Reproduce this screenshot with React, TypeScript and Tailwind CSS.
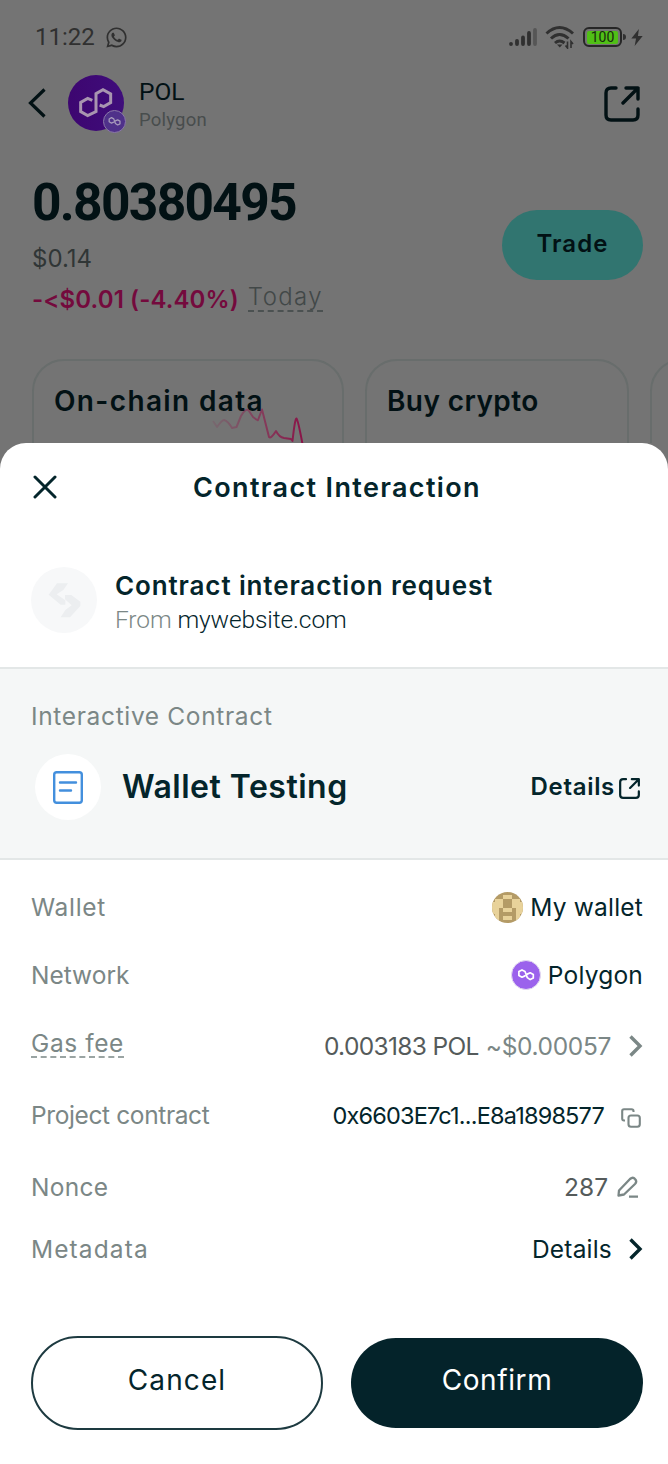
import { ReactNode } from "react";
import { FaWhatsapp } from "react-icons/fa";

const PolygonMark = ({ className }: { className: string }) => (
  <svg viewBox="0 0 28 28" className={className} fill="none" stroke="currentColor" strokeWidth="1.7" strokeLinejoin="round" strokeLinecap="round">
    <path d="M12.9 14.9 10 16.2 6.9 14.4V10.6L10 8.9 13 10.5 15.3 16.6 18.2 18.6 21.3 17.1V13.5L18.2 11.8 15.2 13.1" />
  </svg>
);

const ExternalLink = ({ className, strokeWidth }: { className: string; strokeWidth: number }) => (
  <svg viewBox="0 0 36 36" className={className} fill="none" stroke="currentColor" strokeWidth={strokeWidth} strokeLinecap="round" strokeLinejoin="round">
    <path d="M12 2H7Q2 2 2 7V29Q2 34 7 34H29Q34 34 34 29V23M22 2H34V13M34 2 19 17" />
  </svg>
);

const Chevron = ({ className }: { className: string }) => (
  <svg viewBox="0 0 14 22" className={className} fill="none" stroke="currentColor" strokeWidth="3.4">
    <path d="M1.5 1.5 11 11 1.5 20.5" />
  </svg>
);

const StatusBar = () => (
  <div className="flex h-[74px] items-center pr-[25px] pl-[35px] text-[#303030]">
    <span className="w-[59px] font-[Roboto,sans-serif] text-[24px]">11:22</span>
    <FaWhatsapp className="ml-[11px] size-[23px]" />
    <div className="ml-auto flex items-center">
      <svg viewBox="0 0 28 20" className="h-[20px] w-[28px]" stroke="currentColor" strokeWidth="3.8" strokeLinecap="round">
        <path d="M2 17v-.2M8 17v-3.2M14 17v-6.600M20 17V6" />
        <path d="M26 17V3" className="text-[#565656]" />
      </svg>
      <svg viewBox="0 0 30 24" className="ml-[8px] h-[24px] w-[30px]" fill="none" stroke="currentColor" strokeWidth="3">
        <path d="M1.5 8.5Q14.500-3.500 28 8.500M6 13.500Q14.500 5.500 23.500 13.500M10 18Q14.500 14 19.500 18" />
        <path d="M12 19.5h5.500L14.800 22.500z" fill="currentColor" stroke="none" />
        <path d="M22.5 16.500v6.500l-2-2.500M26 23v-6.500l2 2.500" strokeWidth="1.600" />
      </svg>
      <div className="ml-[8px] flex h-[20px] w-[39px] items-center rounded-[6px] border-2 border-[#262626] p-[2px]">
        <div className="flex h-[13px] flex-1 items-center justify-center rounded-[2px] bg-[#50c016] font-[Roboto,sans-serif] text-[14px] leading-none text-[#182a10]">100</div>
      </div>
      <div className="ml-px h-[6px] w-[3px] rounded-r bg-[#303030]" />
      <svg viewBox="0 0 12 18" className="ml-[5px] h-[17px] w-[12px]" fill="currentColor">
        <path d="M8 0 0 10h5L3.500 18 12 7.500H7z" />
      </svg>
    </div>
  </div>
);

const Header = () => (
  <div className="flex h-[63px] items-center pr-[28px] pl-[28px] text-[#021114]">
    <svg viewBox="0 0 18 30" className="mb-[5px] h-[30px] w-[18px]" fill="none" stroke="currentColor" strokeWidth="3.2">
      <path d="M16.500 1.500 2.500 15l14 13.500" />
    </svg>
    <div className="relative mb-[5px] ml-[22px] size-[56px] rounded-full bg-gradient-to-r from-[#3d0670] to-[#3f0d7b]">
      <svg viewBox="0 0 168 168" className="size-full" fill="none" stroke="#a895b0" strokeWidth="9">
        <path d="M73 76 59 70 38 82v28l21 12 25-12V56l21-12 23 13v26l-21 12-12-5" />
      </svg>
      <div className="absolute -right-[2px] -bottom-[2px] size-[23px] rounded-full border border-[#8b78a8] bg-[#4f318a] text-[#a79bbb]">
        <PolygonMark className="size-full" />
      </div>
    </div>
    <div className="ml-[15px] font-[Roboto,sans-serif]">
      <div className="text-[24.5px] leading-[29px]">POL</div>
      <div className="text-[18.5px] leading-[29px] tracking-[0.2px] text-[#484d4d]">Polygon</div>
    </div>
    <ExternalLink className="mb-[3px] ml-auto size-[36px]" strokeWidth={3.4} />
  </div>
);

const Balance = () => (
  <div className="flex pt-[34px] pr-[25px] pl-[32px]">
    <div>
      <div className="font-[Roboto,sans-serif] text-[51.5px] leading-[64px] font-bold tracking-[-1.7px] text-[#021114]">0.80380495</div>
      <div className="text-[24px] leading-[48px] text-[#303636]">$0.14</div>
      <div className="flex h-[34px] items-center">
        <span className="text-[24px] font-semibold tracking-[0.12px] text-[#740a3d]">-&lt;$0.01 (-4.40%)</span>
        <span className="mb-[6px] ml-[9px] border-b-2 border-dashed border-[#4b5151] text-[24px] leading-[27px] font-light tracking-[1.4px] text-[#424848]">Today</span>
      </div>
    </div>
    <div className="mt-[39px] ml-auto flex h-[70px] w-[141px] items-center justify-center rounded-full bg-[#317570] pb-[2px] text-[24px] font-semibold tracking-[1.1px] text-[#021114]">Trade</div>
  </div>
);

const Cards = () => (
  <div className="mt-[42px] flex h-[84px] gap-[21px] overflow-hidden pl-[32px] text-[28px] leading-[38px] font-semibold text-[#021114]">
    <div className="relative h-[150px] w-[312px] shrink-0 rounded-[32px] border-2 border-[#686d6c] pt-[21px] pl-[20px] tracking-[1.35px]">
      On-chain data
      <svg viewBox="212 400 92 50" className="absolute top-[39px] left-[178px] h-[50px] w-[92px]" fill="none">
        <defs>
          <linearGradient id="trend" x1="0" x2="1">
            <stop offset="0" stopColor="#8a2450" stopOpacity="0.15" />
            <stop offset="0.6" stopColor="#8a2450" stopOpacity="0.75" />
            <stop offset="1" stopColor="#8a1448" />
          </linearGradient>
        </defs>
        <path d="M213 421 217 427Q222 420 224 420 228 421 232 428L236.500 427 241 416Q246 407 249 411L253 417Q258 421 258 420L262 409.500 269 437Q271 439 276 431 279 437 284 438L291 439 292.500 441Q295 418 296.500 418.500 298 420 302.500 444" stroke="url(#trend)" strokeWidth="2" strokeLinejoin="round" />
      </svg>
    </div>
    <div className="h-[150px] w-[264px] shrink-0 rounded-[32px] border-2 border-[#686d6c] pt-[21px] pl-[20px] tracking-[0.4px]">Buy crypto</div>
    <div className="h-[150px] w-[264px] shrink-0 rounded-[32px] border-2 border-[#686d6c]" />
  </div>
);

const Row = ({ className, label, children }: { className: string; label: ReactNode; children: ReactNode }) => (
  <div className={`flex items-center justify-between pr-[25px] pl-[31px] text-[24.5px] ${className}`}>
    <span className="text-[#7b8786]">{label}</span>
    <div className="flex items-center text-[#04252b]">{children}</div>
  </div>
);

const WalletAvatar = () => (
  <svg viewBox="0 0 31 31" className="mr-[7px] size-[31px] rounded-full">
    <path fill="#b49b66" d="M0 0h31v31H0z" />
    <path fill="#e8d29a" d="M11 3h9v4h-9zM3 7h8v9H3zM20 7h8v9h-8zM0 10h3v12H0zM28 10h3v12h-3zM3 16h4v8H3zM24 16h4v8h-4zM11 16h9v4h-9zM11 24h9v4h-9zM3 24h4v4H3zM24 24h4v4h-4z" />
  </svg>
);

export default function App() {
  return (
    <main className="flex h-[1464px] w-[668px] flex-col overflow-hidden bg-[#747474] font-[Inter,sans-serif] whitespace-nowrap">
      <StatusBar />
      <Header />
      <Balance />
      <Cards />
      <section className="flex-1 rounded-t-[26px] bg-white text-[#04252b]">
        <div className="flex h-[90px] items-center px-[33px]">
          <svg viewBox="0 0 24 24" className="mb-[2px] size-[24px]" fill="none" stroke="currentColor" strokeWidth="3" strokeLinecap="round">
            <path d="m2 2 20 20M22 2 2 22" />
          </svg>
          <h1 className="ml-[136px] text-[27px] font-semibold tracking-[1.35px]">Contract Interaction</h1>
        </div>
        <div className="flex h-[136px] border-b-2 border-[#e3e7e7] pt-[34px] pl-[31px]">
          <div className="size-[66px] rounded-full bg-[#f7f8f9]">
            <svg viewBox="0 0 192 198" className="size-full" fill="#eceef0">
              <path d="M75 49h33l-14 20-20 13 26 18v13H86L50 83z" />
              <path d="M99 84h19l27 20v13l-31 34H86l14-22 19-14-20-18z" />
            </svg>
          </div>
          <div className="ml-[18px]">
            <div className="text-[26px] leading-[38px] font-semibold tracking-[0.88px]">Contract interaction request</div>
            <div className="font-[Roboto,sans-serif] text-[24.5px] leading-[30px] font-light tracking-[-0.1px]">
              <span className="text-[#7b8786]">From</span> mywebsite.com
            </div>
          </div>
        </div>
        <div className="h-[191px] border-b-2 border-[#e3e7e7] bg-[#f5f7f7] pt-[29px] pr-[28px] pl-[31px]">
          <div className="text-[24.5px] leading-[36px] tracking-[0.65px] text-[#7b8786]">Interactive Contract</div>
          <div className="mt-[20px] flex h-[66px] items-center">
            <div className="ml-[4px] flex size-[66px] items-center justify-center rounded-full bg-white">
              <svg viewBox="0 0 30 33" className="h-[33px] w-[30px]" fill="none" stroke="#438fdd" strokeWidth="2.400" strokeLinecap="round">
                <rect x="1.200" y="1.200" width="27.600" height="30.600" rx="2.500" />
                <path d="M7 11.500h16M7 19.500h11" />
              </svg>
            </div>
            <span className="ml-[21px] text-[32px] font-semibold tracking-[0.5px]">Wallet Testing</span>
            <span className="ml-auto text-[24px] font-semibold tracking-[0.7px]">Details</span>
            <ExternalLink className="mt-[2px] ml-[4px] size-[21px]" strokeWidth={3.8} />
          </div>
        </div>
        <Row className="mt-[13px] h-[68px]" label={<span className="tracking-[0.7px]">Wallet</span>}>
          <WalletAvatar />
          <span className="tracking-[0.2px]">My wallet</span>
        </Row>
        <Row className="h-[68px]" label="Network">
          <div className="mr-[7px] size-[30px] rounded-full border border-[#e3dcef] bg-[#9b62ec] text-white">
            <PolygonMark className="size-full" />
          </div>
          <span className="tracking-[0.2px]">Polygon</span>
        </Row>
        <Row className="h-[72px]" label={<span className="mb-[2px] block border-b-2 border-dashed border-[#9aa4a3] leading-[26px] tracking-[0.6px]">Gas fee</span>}>
          <span className="mt-[2px] tracking-[-0.65px] text-[#555b5b]">0.003183 POL</span>
          <span className="mt-[2px] ml-[7px] tracking-[-0.35px] text-[#7b8786]">~$0.00057</span>
          <Chevron className="mt-[2px] ml-[18px] h-[22px] w-[14px] text-[#7b8786]" />
        </Row>
        <Row className="h-[69px]" label={<span className="tracking-[-0.38px]">Project contract</span>}>
          <span className="text-[23.5px] tracking-[-0.82px]">0x6603E7c1...E8a1898577</span>
          <svg viewBox="0 0 20 20" className="mt-[5px] mr-[2px] ml-[17px] size-[20px] text-[#7b8786]" fill="none" stroke="currentColor" strokeWidth="2.100">
            <rect x="7.500" y="7.500" width="11.300" height="11.300" rx="2.500" />
            <path d="M4 12.500H3Q1.200 12.500 1.200 10.500V3Q1.200 1.200 3 1.200h7.500Q12.500 1.200 12.500 3V4" />
          </svg>
        </Row>
        <Row className="h-[74px]" label={<span className="tracking-[0.3px]">Nonce</span>}>
          <span className="text-[#555b5b]">287</span>
          <svg viewBox="0 0 22 22" className="mr-[4px] ml-[9px] size-[22px] text-[#7b8786]" fill="none" stroke="currentColor" strokeWidth="2.300" strokeLinejoin="round">
            <path d="M1.500 19.500 2 14.500 13 3Q16 .5 18 3 20.500 5.500 18 8L7 18.500zM12 20.700h9" />
          </svg>
        </Row>
        <Row className="h-[50px]" label={<span className="tracking-[1.1px]">Metadata</span>}>
          <span className="tracking-[0.2px]">Details</span>
          <Chevron className="ml-[17px] h-[22px] w-[14px]" />
        </Row>
        <div className="mt-[62px] flex items-center gap-[28px] pl-[31px] text-[28px]">
          <button className="h-[94px] w-[292px] rounded-full border-2 border-[#1d3a40] pb-[7px] tracking-[1.1px]">Cancel</button>
          <button className="h-[90px] w-[292px] rounded-full bg-[#04232a] pb-[7px] tracking-[0.6px] text-white">Confirm</button>
        </div>
      </section>
    </main>
  );
}
